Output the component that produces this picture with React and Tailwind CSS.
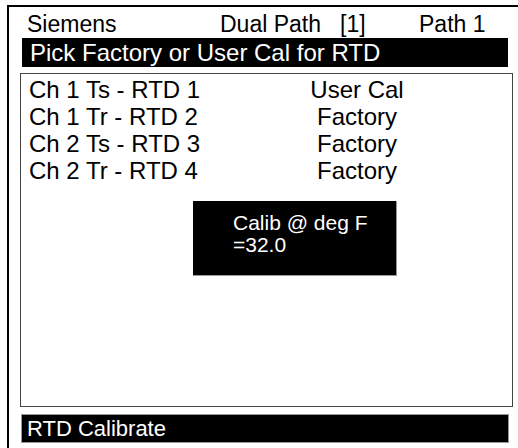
export default function App() {
  const rows = [
    ["Ch 1 Ts - RTD 1", "User Cal"],
    ["Ch 1 Tr - RTD 2", "Factory"],
    ["Ch 2 Ts - RTD 3", "Factory"],
    ["Ch 2 Tr - RTD 4", "Factory"],
  ];
  return (
    <div
      className="w-[518px] h-[448px] overflow-hidden bg-white pt-[5px] pl-[7px] text-black"
      style={{ fontFamily: '"Liberation Sans", Arial, sans-serif' }}
    >
      <div className="w-[530px] h-[460px] border-t-2 border-l-2 border-black">
        {/* header */}
        <div className="flex pt-[6px] pl-[18px] text-[23px] leading-[23px] whitespace-nowrap">
          <span className="w-[193px]">Siemens</span>
          <span className="w-[120px]">Dual Path</span>
          <span className="w-[79px]">[1]</span>
          <span>Path 1</span>
        </div>
        {/* title bar */}
        <div className="mt-[2px] ml-[13px] w-[486px] h-[29px] bg-black text-white pt-[3px] pl-[8px] text-[24px] leading-[24px] whitespace-nowrap">
          Pick Factory or User Cal for RTD
        </div>
        {/* list box */}
        <div className="relative mt-[6px] ml-[11px] w-[493px] h-[334px] border border-[#444]">
          <div className="pt-[2px] text-[24px] leading-[27px] whitespace-nowrap">
            {rows.map(([a, b]) => (
              <div key={a} className="flex">
                <span className="w-[240px] pl-[8px]">{a}</span>
                <span className="w-[192px] text-center">{b}</span>
              </div>
            ))}
          </div>
          <div className="absolute left-[172px] top-[127px] w-[204px] h-[75px] bg-black border-r border-b border-[#999] text-white pt-[11px] pl-[40px] text-[21px] leading-[22px] whitespace-nowrap">
            <div>Calib @ deg F</div>
            <div>=32.0</div>
          </div>
        </div>
        {/* bottom bar */}
        <div className="mt-[7px] ml-[12px] w-[488px] h-[29px] bg-black border border-[#999] text-white pt-[3px] pl-[5px] text-[22px] leading-[22px] whitespace-nowrap">
          RTD Calibrate
        </div>
      </div>
    </div>
  );
}
